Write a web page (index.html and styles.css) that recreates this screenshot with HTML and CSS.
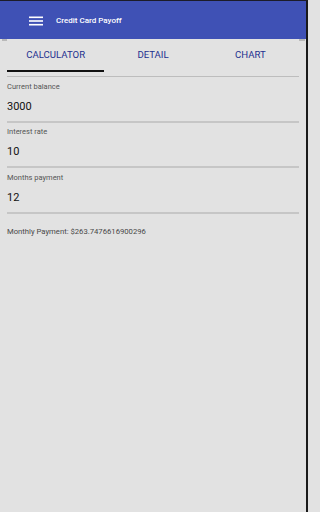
FILE: index.html
```html
<!DOCTYPE html>
<html>
<head>
<meta charset="utf-8">
<link rel="stylesheet" href="styles.css">
</head>
<body>
<div class="app">
  <header class="toolbar">
    <svg class="menu" width="14" height="10" viewBox="0 0 14 10"><rect x="0" y="0.5" width="14" height="1.6" fill="#fff"/><rect x="0" y="4.2" width="14" height="1.6" fill="#fff"/><rect x="0" y="7.9" width="14" height="1.6" fill="#fff"/></svg>
    <span class="title">Credit Card Payoff</span>
  </header>
  <div class="shade"><span class="shade-l"></span><span class="shade-r"></span></div>
  <nav class="tabs">
    <div class="tab active">CALCULATOR</div>
    <div class="tab">DETAIL</div>
    <div class="tab">CHART</div>
  </nav>
  <div class="divider"></div>
  <main class="form">
    <div class="field">
      <div class="label">Current balance</div>
      <div class="value">3000</div>
      <div class="underline"></div>
    </div>
    <div class="field">
      <div class="label">Interest rate</div>
      <div class="value">10</div>
      <div class="underline"></div>
    </div>
    <div class="field">
      <div class="label">Months payment</div>
      <div class="value">12</div>
      <div class="underline"></div>
    </div>
    <div class="result">Monthly Payment: $263.7476616900296</div>
  </main>
</div>
</body>
</html>
```
FILE: styles.css
```css
* { box-sizing: border-box; }
html, body { margin: 0; padding: 0; }
body {
  width: 308px;
  height: 512px;
  overflow: hidden;
  background: #e2e2e2;
  font-family: Roboto, "Liberation Sans", sans-serif;
}
.app {
  width: 308px;
  height: 512px;
  border-top: 1px solid #1c1c2a;
  border-right: 2px solid #1a1a1a;
  display: flex;
  flex-direction: column;
}
.toolbar {
  height: 38px;
  background: #3f51b5;
  display: flex;
  align-items: center;
  padding-left: 29px;
}
.menu { display: block; margin-top: 1px; }
.title {
  margin-left: 13px;
  color: #fff;
  font-size: 8px;
  font-weight: 500;
}
.shade {
  height: 2px;
  display: flex;
  justify-content: space-between;
}
.shade-l { width: 5px; margin-left: 2px; background: #b9b9b9; }
.shade-r { width: 6px; margin-right: 1px; background: #b9b9b9; }
.tabs {
  display: flex;
  margin: 0 7px;
}
.tab {
  flex: 1;
  height: 31px;
  display: flex;
  align-items: center;
  justify-content: center;
  padding-bottom: 2px;
  border-bottom: 2px solid transparent;
  color: #22308f;
  font-size: 9.6px;
}
.tab.active { border-bottom-color: #111; }
.divider {
  margin: 4px 7px 0;
  height: 1px;
  background: #bdbdbd;
}
.form {
  margin: 0 7px;
  display: flex;
  flex-direction: column;
}
.field { padding-top: 4.5px; }
.label {
  height: 10px;
  line-height: 10px;
  font-size: 7.5px;
  color: #555;
}
.value {
  margin-top: 8px;
  height: 14px;
  line-height: 14px;
  font-size: 11px;
  color: #111;
}
.underline {
  margin-top: 7px;
  height: 2px;
  background: #c6c6c6;
}
.result {
  margin-top: 13.5px;
  height: 10px;
  line-height: 10px;
  font-size: 7.7px;
  color: #484848;
}
```
